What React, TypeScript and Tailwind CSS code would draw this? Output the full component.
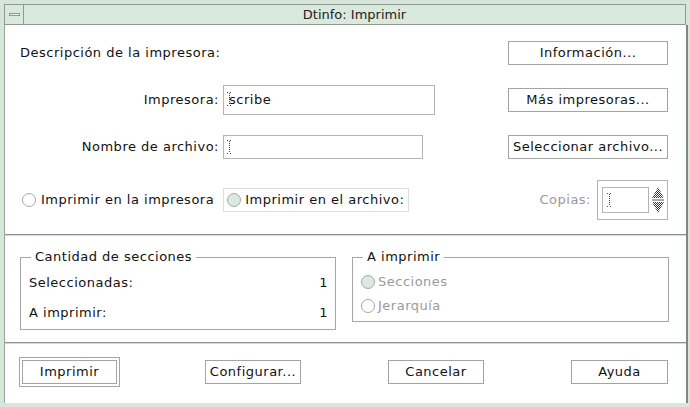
import React from 'react';

const font = { fontFamily: '"DejaVu Sans", "Liberation Sans", sans-serif' };

const IBeam: React.FC<{ className?: string }> = ({ className }) => (
  <svg width="5" height="14" viewBox="0 0 5 14" className={className}>
    <path d="M0 0.5h2M3 0.5h2M2.5 1v12M0 13.5h2M3 13.5h2" stroke="#444" strokeWidth="1" strokeDasharray="1 1" fill="none" />
  </svg>
);

const Radio: React.FC<{ on?: boolean }> = ({ on }) => (
  <span
    className={`inline-block w-[14px] h-[14px] rounded-full border shrink-0 ${
      on ? 'bg-[#dce9df] border-[#a3aca5]' : 'bg-white border-[#a8a8a8]'
    }`}
  />
);

const Button: React.FC<{ label: string; className?: string }> = ({ label, className }) => (
  <div
    className={`h-[24px] border border-[#a4a4a4] bg-white flex items-center justify-center text-[13px] text-[#111] ${className ?? ''}`}
  >
    {label}
  </div>
);

const SpinArrows: React.FC = () => (
  <svg width="14" height="28" viewBox="0 0 14 28">
    <defs>
      <pattern id="dith" width="2" height="2" patternUnits="userSpaceOnUse">
        <rect width="2" height="2" fill="#ffffff" />
        <rect width="1" height="1" fill="#333" />
        <rect x="1" y="1" width="1" height="1" fill="#333" />
      </pattern>
    </defs>
    <polygon points="7,1 13,12 1,12" fill="url(#dith)" />
    <line x1="1" y1="14" x2="13" y2="14" stroke="#555" />
    <polygon points="1,16 13,16 7,27" fill="url(#dith)" />
  </svg>
);

export default function App() {
  return (
    <div style={font} className="w-[690px] h-[407px] bg-[#d7e6da] pt-[4px] pl-[4px] pr-[2px] pb-[4px] flex flex-col text-[13px] text-[#111]">
      {/* title bar */}
      <div className="h-[21px] flex border border-[#8e9a90] bg-[#dae9dd] mr-[2px]">
        <div className="w-[19px] border-r border-[#8e9a90] flex items-center justify-center">
          <span className="block w-[11px] h-[3px] border border-[#8e9a90] bg-[#e8f1ea]" />
        </div>
        <div className="flex-1 flex items-center justify-center text-[13px] text-[#222]">Dtinfo: Imprimir</div>
      </div>

      {/* body */}
      <div className="flex-1 flex flex-col bg-white border-l border-[#9aa39c] border-r-2 border-r-[#7d877f] tracking-[0.5px]">
        {/* top section */}
        <div className="pt-[16px] pl-[15px] pr-[18px] pb-[14px]">
          <div className="h-[24px] flex items-center">
            <span>Descripción de la impresora:</span>
            <Button label="Información..." className="ml-auto w-[160px]" />
          </div>

          <div className="mt-[20px] h-[30px] flex items-center">
            <span className="w-[199px] text-right">Impresora:</span>
            <div className="ml-[4px] w-[212px] h-[30px] border border-[#b4b4b4] relative pl-[5px] pt-[4px]">
              <span>scribe</span>
              <IBeam className="absolute left-[3px] top-[6px]" />
            </div>
            <Button label="Más impresoras..." className="ml-auto w-[160px]" />
          </div>

          <div className="mt-[20px] h-[24px] flex items-center">
            <span className="w-[199px] text-right">Nombre de archivo:</span>
            <div className="ml-[4px] w-[200px] h-[24px] border border-[#b4b4b4] relative">
              <IBeam className="absolute left-[3px] top-[4px]" />
            </div>
            <Button label="Seleccionar archivo..." className="ml-auto w-[160px]" />
          </div>

          <div className="mt-[21px] h-[40px] flex items-center">
            <div className="flex items-center gap-[5px] pl-[2px]">
              <Radio />
              <span>Imprimir en la impresora</span>
            </div>
            <div className="ml-[9px] h-[24px] w-[186px] border border-[#d6e2d8] flex items-center gap-[4px] pl-[3px]">
              <Radio on />
              <span>Imprimir en el archivo:</span>
            </div>
            <span className="ml-auto mr-[6px] text-[#9a9a9a]">Copias:</span>
            <div className="w-[71px] h-[40px] border border-[#b4b4b4] flex items-center pl-[4px] gap-[2px]">
              <div className="w-[47px] h-[26px] border border-[#b4b4b4] relative">
                <IBeam className="absolute left-[4px] top-[5px]" />
              </div>
              <SpinArrows />
            </div>
          </div>
        </div>

        <div className="h-[2px] border-t border-[#8f8f8f] border-b border-b-[#d8d8d8]" />

        {/* middle section */}
        <div className="flex pt-[20px] pl-[15px] pr-[17px] h-[106px]">
          <div className="relative w-[316px] h-[73px] border border-[#a6a6a6] mt-[1px] pl-[8px] pr-[7px] pt-[15px]">
            <span className="absolute left-[10px] -top-[9px] bg-white px-[4px] leading-[16px]">Cantidad de secciones</span>
            <div className="flex justify-between h-[20px] items-center">
              <span>Seleccionadas:</span>
              <span>1</span>
            </div>
            <div className="flex justify-between h-[20px] items-center mt-[10px]">
              <span>A imprimir:</span>
              <span>1</span>
            </div>
          </div>
          <div className="relative ml-auto w-[317px] h-[65px] border border-[#a6a6a6] mt-[1px] pl-[8px] pt-[15px]">
            <span className="absolute left-[10px] -top-[9px] bg-white px-[4px] leading-[16px]">A imprimir</span>
            <div className="flex items-center gap-[3px] h-[18px] text-[#9a9a9a]">
              <Radio on />
              <span>Secciones</span>
            </div>
            <div className="flex items-center gap-[3px] h-[18px] mt-[6px] text-[#9a9a9a]">
              <Radio />
              <span>Jerarquía</span>
            </div>
          </div>
        </div>

        <div className="h-[2px] border-t border-[#8f8f8f] border-b border-b-[#d8d8d8]" />

        {/* bottom buttons */}
        <div className="flex-1 flex items-center pl-[14px] pr-[18px] pb-[3px]">
          <div className="border border-[#a4a4a4] p-[2px]">
            <Button label="Imprimir" className="w-[95px]" />
          </div>
          <Button label="Configurar..." className="ml-[85px] w-[96px]" />
          <Button label="Cancelar" className="ml-[87px] w-[96px]" />
          <Button label="Ayuda" className="ml-auto w-[97px]" />
        </div>
      </div>
    </div>
  );
}
